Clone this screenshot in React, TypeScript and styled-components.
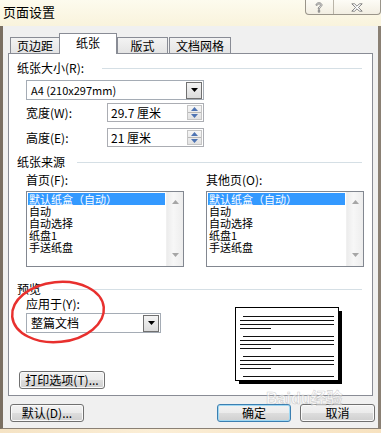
import styled, { createGlobalStyle } from 'styled-components';

const GlobalStyle = createGlobalStyle`
  * { box-sizing: border-box; }
  html, body { margin: 0; padding: 0; background: #fbf6e3; }
  body {
    font-family: "Noto Sans CJK SC", "Liberation Sans", sans-serif;
    font-size: 12px;
    color: #000;
  }
`;

const Window = styled.div`
  width: 381px;
  height: 433px;
  display: flex;
  flex-direction: column;
  position: relative;
  overflow: hidden;
  background: #fbf4de;
`;

const TitleBar = styled.div`
  height: 26px;
  display: flex;
  justify-content: space-between;
  align-items: flex-start;
  background: linear-gradient(#fdfbee, #f9f3dc);
`;

const Title = styled.div`
  font-size: 13px;
  line-height: 24px;
  padding-left: 3px;
`;

const CaptionGroup = styled.div`
  display: flex;
  height: 15px;
  width: 76px;
  border: 1px solid #9a958a;
  border-top: none;
  border-radius: 0 0 4px 4px;
  background: linear-gradient(#fdfcf6, #f2eee2);
`;

const CaptionButton = styled.div<{ $w: number; $divider?: boolean }>`
  width: ${p => p.$w}px;
  display: flex;
  align-items: center;
  justify-content: center;
  border-right: ${p => (p.$divider ? '1px solid #b9b4a8' : 'none')};
`;

const Body = styled.div`
  flex: 1;
  background: #f0f0f0;
  border-left: 3px solid #7a6f62;
  border-right: 3px solid #8a8074;
  border-bottom: 1px solid #8a8074;
  display: flex;
  flex-direction: column;
`;

const BottomStrip = styled.div`
  height: 4px;
  background: linear-gradient(90deg, #f5e3c4, #fbeed6 40%, #f7e2c0);
`;

const TabRow = styled.div`
  display: flex;
  align-items: flex-end;
  height: 20px;
  margin: 7px 0 0 7px;
`;

const Tab = styled.div<{ $w: number; $active?: boolean; $ml?: number }>`
  width: ${p => p.$w}px;
  height: ${p => (p.$active ? 21 : 16)}px;
  margin-left: ${p => p.$ml ?? 0}px;
  margin-bottom: ${p => (p.$active ? -1 : 0)}px;
  position: relative;
  z-index: ${p => (p.$active ? 1 : 0)};
  border: 1px solid #898c95;
  border-bottom: none;
  background: ${p => (p.$active ? '#fff' : 'linear-gradient(#f3f3f3, #e4e4e4)')};
  display: flex;
  align-items: center;
  justify-content: center;
  font-size: 12px;
  line-height: 14px;
  padding-bottom: ${p => (p.$active ? 3 : 0)}px;
`;

const Panel = styled.div`
  margin-left: 5px;
  width: 365px;
  height: 343px;
  border: 1px solid #898c95;
  background: #fff;
  padding: 7px 8px 0 8px;
  display: flex;
  flex-direction: column;
`;

const SectionHeader = styled.div<{ $mt?: number; $gap?: number }>`
  display: flex;
  align-items: center;
  height: 14px;
  line-height: 14px;
  margin-top: ${p => p.$mt ?? 0}px;

  &::after {
    content: '';
    flex: 1;
    height: 1px;
    background: #d5dfe5;
    margin-left: ${p => p.$gap ?? 12}px;
    margin-right: 2px;
  }
`;

const Indent = styled.div`
  margin-left: 9px;
  display: flex;
  flex-direction: column;
`;

const Select = styled.div<{ $w: number; $mt?: number }>`
  width: ${p => p.$w}px;
  height: 20px;
  margin-top: ${p => p.$mt ?? 0}px;
  border: 1px solid #a5acb5;
  background: #fff;
  display: flex;
  align-items: center;
  padding: 1px;
`;

const SelectText = styled.div<{ $size?: number }>`
  flex: 1;
  padding-left: 3px;
  font-size: ${p => p.$size ?? 12}px;
  line-height: 16px;
`;

const DropButton = styled.div`
  width: 16px;
  height: 17px;
  border: 1px solid #707070;
  background: linear-gradient(#f4f4f4, #dcdcdc);
  display: flex;
  align-items: center;
  justify-content: center;
`;

const FieldRow = styled.div<{ $mt: number }>`
  display: flex;
  align-items: center;
  height: 19px;
  margin-top: ${p => p.$mt}px;
`;

const FieldLabel = styled.div`
  width: 81px;
  line-height: 14px;
`;

const SpinBox = styled.div`
  width: 97px;
  height: 19px;
  border: 1px solid #abadb3;
  display: flex;
  align-items: center;
  padding: 1px;
`;

const SpinText = styled.div`
  flex: 1;
  padding-left: 2px;
  line-height: 15px;
`;

const SpinButtons = styled.div`
  width: 15px;
  height: 15px;
  display: flex;
  flex-direction: column;
  border: 1px solid #c5c5c5;
  background: linear-gradient(#f6f6f6, #e2e2e2);
`;

const SpinHalf = styled.div<{ $top?: boolean }>`
  flex: 1;
  display: flex;
  align-items: center;
  justify-content: center;
  border-bottom: ${p => (p.$top ? '1px solid #b8b8b8' : 'none')};
`;

const SourceColumns = styled.div`
  display: flex;
  gap: 22px;
  margin: 4px 0 0 9px;
`;

const SourceColumn = styled.div`
  display: flex;
  flex-direction: column;
`;

const ColLabel = styled.div`
  line-height: 14px;
  height: 14px;
`;

const ListBox = styled.div`
  margin-top: 4px;
  width: 158px;
  height: 76px;
  border: 1px solid #828790;
  background: #fff;
  display: flex;
`;

const ListItems = styled.div`
  flex: 1;
  padding: 1px;
`;

const ListItem = styled.div<{ $selected?: boolean }>`
  height: 12px;
  line-height: 12px;
  font-size: 11px;
  padding-left: 1px;
  white-space: nowrap;
  background: ${p => (p.$selected ? '#3399ff' : 'transparent')};
  color: ${p => (p.$selected ? '#fff' : '#000')};
`;

const ScrollBar = styled.div`
  width: 17px;
  background: linear-gradient(90deg, #ececec, #f7f7f7 40%, #ededed);
  border-left: 1px solid #f0f0f0;
  display: flex;
  flex-direction: column;
  justify-content: space-between;
  align-items: center;
  padding: 8px 0 9px;
`;

const PreviewRow = styled.div`
  display: flex;
`;

const PreviewLeft = styled.div`
  width: 200px;
  display: flex;
  flex-direction: column;
`;

const ApplyLabel = styled.div`
  margin: 1px 0 0 9px;
  line-height: 14px;
`;

const Button = styled.div<{ $w: number; $primary?: boolean }>`
  width: ${p => p.$w}px;
  height: 18px;
  border: 1px solid ${p => (p.$primary ? '#3c7fb1' : '#707070')};
  border-radius: 3px;
  background: linear-gradient(#f2f2f2 0%, #ebebeb 50%, #dddddd 51%, #cfcfcf 100%);
  box-shadow: ${p => (p.$primary ? 'inset 0 0 0 1px #9fd8f3' : 'inset 0 0 0 1px #fafafa')};
  display: flex;
  align-items: center;
  justify-content: center;
  line-height: 14px;
  white-space: nowrap;
`;

const PrintButton = styled(Button)`
  margin: 38px 0 0 2px;
`;

const PagePreview = styled.div`
  margin: 11px 0 0 18px;
  width: 107px;
  height: 77px;
`;

const Footer = styled.div`
  display: flex;
  align-items: center;
  margin-top: 8px;
  padding: 0 3px 0 7px;
`;

const Spacer = styled.div`
  flex: 1;
`;

const Gap = styled.div`
  width: 9px;
`;

const Annotation = styled.svg`
  position: absolute;
  left: 6px;
  top: 276px;
  pointer-events: none;
`;

const Watermark = styled.div`
  position: absolute;
  left: 266px;
  top: 392px;
  pointer-events: none;
  font-family: "Liberation Sans", "Noto Sans CJK SC", sans-serif;
  font-size: 16px;
  font-weight: bold;
  line-height: 14px;
  color: rgba(255, 255, 255, 0.55);
  -webkit-text-stroke: 0.6px rgba(150, 150, 150, 0.45);
`;

const DownTriangle = ({ color = '#000' }: { color?: string }) => (
  <svg width="7" height="4" viewBox="0 0 7 4">
    <path d="M0 0H7L3.5 4Z" fill={color} />
  </svg>
);

const UpTriangle = ({ color = '#000' }: { color?: string }) => (
  <svg width="7" height="4" viewBox="0 0 7 4">
    <path d="M0 4H7L3.5 0Z" fill={color} />
  </svg>
);

const sourceItems = ['默认纸盒（自动）', '自动', '自动选择', '纸盘1', '手送纸盘'];

const SourceList = () => (
  <ListBox>
    <ListItems>
      {sourceItems.map((item, i) => (
        <ListItem key={item} $selected={i === 0}>
          {item}
        </ListItem>
      ))}
    </ListItems>
    <ScrollBar>
      <UpTriangle color="#a6a6a6" />
      <DownTriangle color="#a6a6a6" />
    </ScrollBar>
  </ListBox>
);

const Spin = ({ value }: { value: string }) => (
  <SpinBox>
    <SpinText>{value}</SpinText>
    <SpinButtons>
      <SpinHalf $top>
        <UpTriangle color="#4f74b3" />
      </SpinHalf>
      <SpinHalf>
        <DownTriangle color="#4f74b3" />
      </SpinHalf>
    </SpinButtons>
  </SpinBox>
);

// little page drawing with three paragraphs of "text"
const paragraphTops = [9, 29, 49, 69];

const PageDrawing = () => (
  <svg width="107" height="77" viewBox="0 0 107 77">
    <rect x="4" y="4" width="103" height="73" fill="#000" />
    <rect x="0.5" y="0.5" width="103" height="73" fill="#fff" stroke="#000" />
    {paragraphTops.map(top => (
      <g key={top} fill="#111">
        <rect x="8" y={top} width="91" height="1" />
        {top < 69 && (
          <>
            <rect x="5" y={top + 4} width="94" height="1" />
            <rect x="5" y={top + 8} width="94" height="1" />
            <rect x="5" y={top + 12} width="31" height="1" />
          </>
        )}
      </g>
    ))}
  </svg>
);

const App = () => {
  return (
    <Window>
      <GlobalStyle />
      <TitleBar>
        <Title>页面设置</Title>
        <CaptionGroup>
          <CaptionButton $w={28} $divider>
            <svg width="8" height="11" viewBox="0 0 8 11">
              <path
                d="M1 3.2C1 1.6 2.3 0.8 4 0.8S7 1.7 7 3.1C7 4.6 5 5 4.6 6.4V7.2H3.3V6.2C3.6 4.4 5.6 4.1 5.6 3.1 5.6 2.4 4.9 2 4 2S2.4 2.5 2.4 3.2Z M3.3 8.2H4.7V10.2H3.3Z"
                fill="#fff"
                stroke="#6a6a6a"
                strokeWidth="0.8"
              />
            </svg>
          </CaptionButton>
          <CaptionButton $w={47}>
            <svg width="12" height="9" viewBox="0 0 12 9">
              <path
                d="M0.8 0.8H3.6L6 3.2 8.4 0.8H11.2L7.4 4.5 11.2 8.2H8.4L6 5.8 3.6 8.2H0.8L4.6 4.5Z"
                fill="#fff"
                stroke="#6a6a6a"
                strokeWidth="0.8"
              />
            </svg>
          </CaptionButton>
        </CaptionGroup>
      </TitleBar>

      <Body>
        <TabRow>
          <Tab $w={50}>页边距</Tab>
          <Tab $w={58} $ml={-1} $active>
            纸张
          </Tab>
          <Tab $w={51}>版式</Tab>
          <Tab $w={62} $ml={1}>
            文档网格
          </Tab>
        </TabRow>

        <Panel>
          <SectionHeader $gap={18}>纸张大小(R):</SectionHeader>
          <Indent>
            <Select $w={178} $mt={5}>
              <SelectText $size={11}>A4 (210x297mm)</SelectText>
              <DropButton>
                <DownTriangle />
              </DropButton>
            </Select>
            <FieldRow $mt={3}>
              <FieldLabel>宽度(W):</FieldLabel>
              <Spin value="29.7 厘米" />
            </FieldRow>
            <FieldRow $mt={6}>
              <FieldLabel>高度(E):</FieldLabel>
              <Spin value="21 厘米" />
            </FieldRow>
          </Indent>

          <SectionHeader $mt={8}>纸张来源</SectionHeader>
          <SourceColumns>
            <SourceColumn>
              <ColLabel>首页(F):</ColLabel>
              <SourceList />
            </SourceColumn>
            <SourceColumn>
              <ColLabel>其他页(O):</ColLabel>
              <SourceList />
            </SourceColumn>
          </SourceColumns>

          <SectionHeader $mt={15}>预览</SectionHeader>
          <PreviewRow>
            <PreviewLeft>
              <ApplyLabel>应用于(Y):</ApplyLabel>
              <Indent>
                <Select $w={135} $mt={2}>
                  <SelectText>整篇文档</SelectText>
                  <DropButton>
                    <DownTriangle />
                  </DropButton>
                </Select>
              </Indent>
              <PrintButton $w={86}>打印选项(T)...</PrintButton>
            </PreviewLeft>
            <PagePreview>
              <PageDrawing />
            </PagePreview>
          </PreviewRow>
        </Panel>

        <Footer>
          <Button $w={74}>默认(D)...</Button>
          <Spacer />
          <Button $w={74} $primary>
            确定
          </Button>
          <Gap />
          <Button $w={75}>取消</Button>
        </Footer>
      </Body>
      <BottomStrip />

      <Annotation width="110" height="72" viewBox="0 0 110 72">
        <ellipse
          cx="52"
          cy="36"
          rx="46"
          ry="30"
          transform="rotate(-6 52 36)"
          fill="none"
          stroke="#e8302e"
          strokeWidth="2.5"
        />
      </Annotation>

      <Watermark>Baidu经验</Watermark>
    </Window>
  );
};

export default App;
